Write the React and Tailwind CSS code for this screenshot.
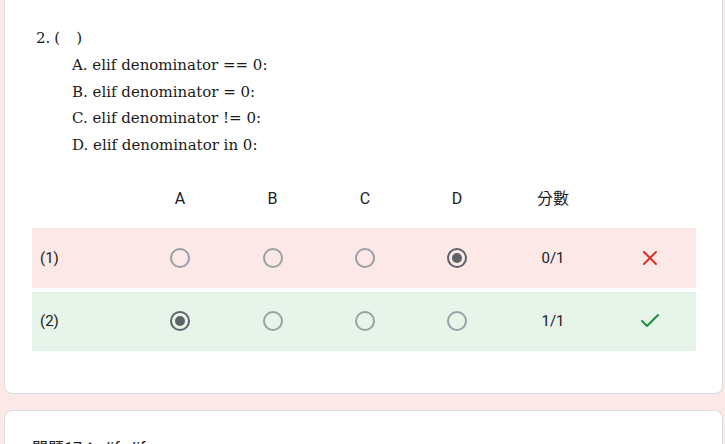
import { X, Check } from "lucide-react";

const options = [
  "A. elif denominator == 0:",
  "B. elif denominator = 0:",
  "C. elif denominator != 0:",
  "D. elif denominator in 0:",
];

const rows = [
  { label: "(1)", picked: 3, score: "0/1", correct: false },
  { label: "(2)", picked: 0, score: "1/1", correct: true },
];

const cols = "grid grid-cols-[102px_92px_93px_92px_92px_100px_93px]";

function Radio({ checked }) {
  if (checked) {
    return (
      <span className="flex h-5 w-5 items-center justify-center rounded-full border-2 border-[#5f6368]">
        <span className="h-[10px] w-[10px] rounded-full bg-[#5f6368]" />
      </span>
    );
  }
  return <span className="h-5 w-5 rounded-full border-2 border-[#9aa0a6]" />;
}

export default function App() {
  return (
    <div className="h-[444px] overflow-hidden bg-[#fce8e6] font-['Roboto',sans-serif] text-[#202124]">
      <div className="ml-1 w-[719px] rounded-b-lg border border-t-0 border-[#dadce0] bg-white pl-[27px] pr-[26px] pb-[42px] pt-[28px]">
        <div className="ml-1 font-['DejaVu_Serif',serif] text-[15px] leading-[20px] text-[#1a1a1a]">
          <div className="flex">
            <span>2.</span>
            <span className="ml-[4px]">(</span>
            <span className="ml-[16px]">)</span>
          </div>
          <div className="ml-9 mt-[7px] flex flex-col gap-[6.7px]">
            {options.map((o) => (
              <div key={o}>{o}</div>
            ))}
          </div>
        </div>

        <div className={`${cols} mt-[32px] h-[24px] items-center text-[16px]`}>
          <div />
          <div className="text-center">A</div>
          <div className="text-center">B</div>
          <div className="text-center">C</div>
          <div className="text-center">D</div>
          <div className="text-center font-['Roboto','Noto_Sans_CJK_TC',sans-serif]">分數</div>
          <div />
        </div>

        <div className="mt-[17px] flex flex-col gap-1">
          {rows.map((r) => (
            <div
              key={r.label}
              className={`${cols} h-[59.5px] items-center text-[15px] ${r.correct ? "bg-[#e6f4ea]" : "bg-[#fce8e6]"}`}
            >
              <div className="pl-2">{r.label}</div>
              {[0, 1, 2, 3].map((i) => (
                <div key={i} className="flex justify-center">
                  <Radio checked={r.picked === i} />
                </div>
              ))}
              <div className="text-center">{r.score}</div>
              <div className="flex justify-center">
                {r.correct ? (
                  <Check className="h-6 w-6 text-[#1e8e3e]" strokeWidth={2} />
                ) : (
                  <X className="h-6 w-6 text-[#d93025]" strokeWidth={2} />
                )}
              </div>
            </div>
          ))}
        </div>
      </div>

      <div className="ml-1 mt-4 h-[80px] w-[719px] rounded-t-lg border border-b-0 border-[#dadce0] bg-white pl-[27px] pt-[26px]">
        <div className="font-['Roboto','Noto_Sans_CJK_TC',sans-serif] text-[16px]">問題17：elif elif</div>
      </div>
    </div>
  );
}
